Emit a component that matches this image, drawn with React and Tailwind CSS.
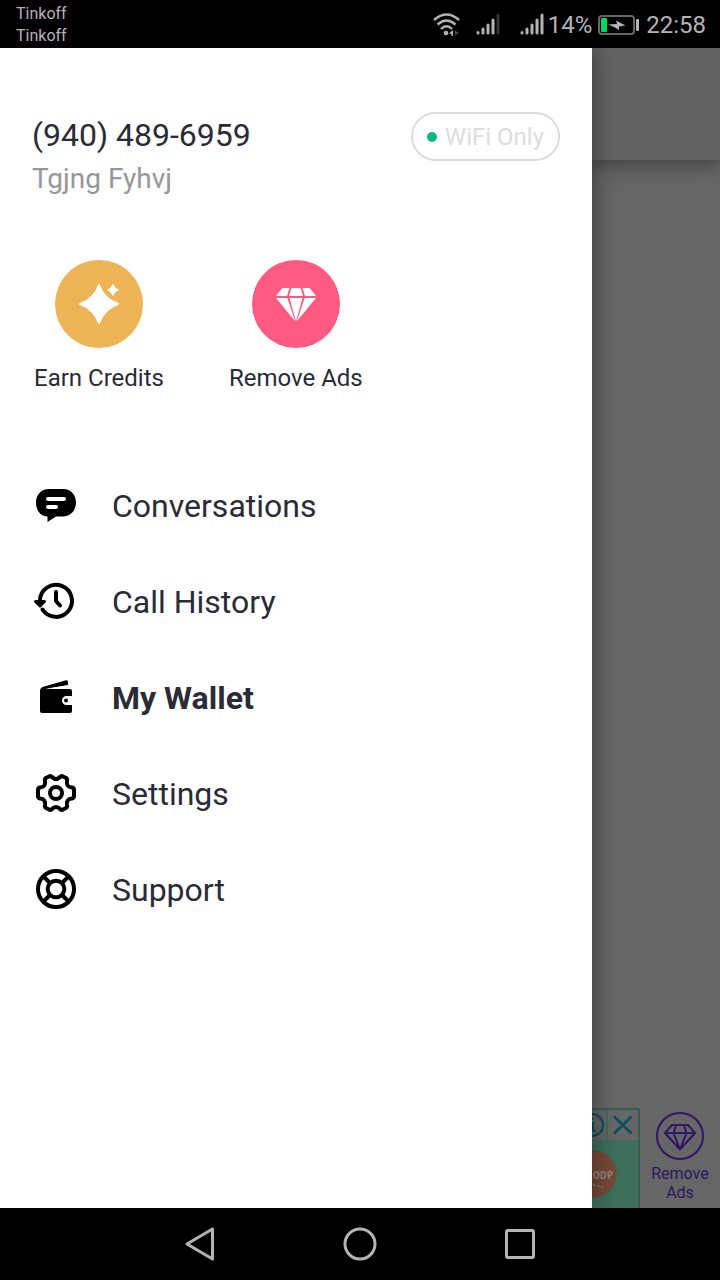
import React from 'react';

function WifiIcon() {
  return (
    <svg width="28" height="24" viewBox="0 0 28 24" fill="none" stroke="#b3b3b3" strokeWidth="2.4" aria-hidden="true">
      <path d="M2 7Q14.500 -4 27 7" />
      <path d="M5.500 11.500Q14.500 3.500 23.500 11.500" />
      <path d="M9 16Q14.500 10.500 20 16" />
      <circle cx="14" cy="20" r="2.300" fill="#b3b3b3" stroke="none" />
      <path d="M17 20.500L21 17V23H19.500V21z" fill="#b3b3b3" stroke="none" />
      <path d="M23 17.500v5l4-2.500z" fill="#444" stroke="none" />
    </svg>
  );
}

function SignalIcon({ last }) {
  return (
    <svg width="24" height="24" viewBox="0 0 24 24" strokeWidth="3" strokeLinecap="round" stroke="#b3b3b3" aria-hidden="true">
      <path d="M2 19.500V20M7 16V20M12 12V20M17 7V20" />
      <path d="M22 2V20" stroke={last} />
    </svg>
  );
}

function BatteryIcon() {
  return (
    <svg width="42" height="22" viewBox="0 0 42 22" aria-hidden="true">
      <rect x="1" y="2" width="35" height="18" rx="3" fill="none" stroke="#666" strokeWidth="2" />
      <rect x="3" y="4" width="6" height="14" rx="1" fill="#00d95a" />
      <path d="M10 10.500L19 10L18 6.500L27.500 11.500L21 12.500L21 16L16 13z" fill="#b3b3b3" />
      <rect x="38" y="5" width="3" height="12" rx="1" fill="#b3b3b3" />
    </svg>
  );
}

function SparkleIcon() {
  return (
    <svg width="88" height="88" viewBox="0 0 88 88" fill="#fff" stroke="#fff" strokeLinejoin="round" aria-hidden="true">
      <path d="M44 25Q49 39 63 44Q49 49 44 63Q39 49 25 44Q39 39 44 25z" strokeWidth="2" />
      <path d="M58 24.500Q59.500 28.500 63.500 30Q59.500 31.500 58 35.500Q56.500 31.500 52.500 30Q56.500 28.500 58 24.500z" strokeWidth="1" />
    </svg>
  );
}

function GemIcon() {
  return (
    <svg width="88" height="88" viewBox="0 0 88 88" fill="#fff" aria-hidden="true">
      <path d="M30.500 28H37.500L35 36H24zM39.500 28h9L51 36H37zM50.500 28H57.500L64 36H53zM24 38h11.500L43 61zM37.500 38h13L44 61.500zM52.500 38H64L45 61z" />
    </svg>
  );
}

function ChatIcon() {
  return (
    <svg width="48" height="48" viewBox="0 0 48 48" aria-hidden="true">
      <path d="M17 7H31C39 7 44 13 44 20.500S39 34.500 31 34.500H24L15.500 40V34.500C8 34 4 28 4 20.500S9 7 17 7z" />
      <path d="M16 17H32M16 25H24" stroke="#fff" strokeWidth="4" strokeLinecap="round" />
    </svg>
  );
}

function HistoryIcon() {
  return (
    <svg width="48" height="48" viewBox="0 1 48 48" fill="none" stroke="#000" strokeWidth="4" strokeLinecap="round" strokeLinejoin="round" aria-hidden="true">
      <path d="M8 23A16 16 0 1 1 10.500 32.500" />
      <path d="M24 15V24L28 28.500" />
      <path d="M3.500 24.500H12.500L8 29z" fill="#000" strokeWidth="3" />
    </svg>
  );
}

function WalletIcon() {
  return (
    <svg width="48" height="48" viewBox="0 1 48 48" aria-hidden="true">
      <path d="M8 17.500Q8 15 10.500 14L34 7.300Q36 7 36 9V12L15 16H38Q40 16 40 18V23H34.500A4 4 0 0 0 34.500 32H40V38Q40 40 38 40H10Q8 40 8 38z" />
      <path d="M13 15.800L36 12.200V15.800z" fill="#fff" />
      <circle cx="34" cy="27.500" r="2" />
    </svg>
  );
}

function GearIcon() {
  return (
    <svg width="48" height="48" viewBox="0 1 48 48" fill="none" stroke="#000" strokeWidth="4" strokeLinejoin="round" aria-hidden="true">
      <path d="M17 7.500Q18.500 6.500 20 8Q24 12 28 8Q29.500 6.500 31 7.500L34 9Q35.500 10 35 12Q34 18 40 18.500Q42 19 42 21V27Q42 29 40 29.500Q34 30 35 36Q35.500 38 34 39L31 40.500Q29.500 41.500 28 40Q24 36 20 40Q18.500 41.500 17 40.500L14 39Q12.500 38 13 36Q14 30 8 29.500Q6 29 6 27V21Q6 19 8 18.500Q14 18 13 12Q12.500 10 14 9z" />
      <circle cx="24" cy="24" r="6" />
    </svg>
  );
}

function SupportIcon() {
  return (
    <svg width="48" height="48" viewBox="0 1 48 48" fill="none" stroke="#000" strokeWidth="4" aria-hidden="true">
      <circle cx="24" cy="24" r="18" />
      <circle cx="24" cy="24" r="8.300" />
      <path d="M11.500 11.500L18 18M36.500 11.500L30 18M11.500 36.500L18 30M36.500 36.500L30 30" />
    </svg>
  );
}

function OutlineGemIcon() {
  return (
    <svg width="50" height="50" viewBox="0 0 50 50" fill="none" stroke="#2e1565" strokeWidth="2" strokeLinejoin="round" aria-hidden="true">
      <circle cx="25" cy="25" r="23" />
      <path d="M17 14H33L40 22L25 38.500L10 22zM10 22H40M21 14L18.500 22L25 38.500L31.500 22L29 14" />
    </svg>
  );
}

function AdBadge() {
  return (
    <svg width="48" height="68" viewBox="0 0 48 68" aria-hidden="true">
      <circle cx="1" cy="34" r="23.500" fill="#774837" />
      <g fill="#8f8783" fontFamily="Roboto, sans-serif" fontWeight="700">
        <text x="1" y="39" fontSize="10">OD</text>
        <text x="16" y="39" fontSize="10" transform="rotate(-15 16 39)">P</text>
        <path d="M1 45q5 0 10 3" stroke="#806b60" strokeWidth="2" strokeDasharray="3 1" fill="none" />
      </g>
    </svg>
  );
}

const menu = [
  { label: 'Conversations', Icon: ChatIcon },
  { label: 'Call History', Icon: HistoryIcon },
  { label: 'My Wallet', Icon: WalletIcon, active: true },
  { label: 'Settings', Icon: GearIcon },
  { label: 'Support', Icon: SupportIcon },
];

function StatusBar() {
  return (
    <header className="relative z-20 flex h-12 items-center justify-between bg-black pt-0.5 pr-3.5 pl-4 text-[#b3b3b3]">
      <div className="text-base leading-[22px]">
        <p>Tinkoff</p>
        <p>Tinkoff</p>
      </div>
      <div className="flex items-center text-2xl">
        <WifiIcon />
        <span className="ml-4 flex"><SignalIcon last="#333" /></span>
        <span className="ml-5 flex"><SignalIcon last="#b3b3b3" /></span>
        <span className="ml-1">14%</span>
        <span className="mx-1.5 flex"><BatteryIcon /></span>
        <span>22:58</span>
      </div>
    </header>
  );
}

function Drawer() {
  return (
    <section className="relative z-10 flex-1 bg-white px-8 pt-16 text-[#2a2b37] shadow-[0_0_24px_rgba(0,0,0,0.45)]">
      <div className="flex items-start justify-between">
        <div>
          <h1 className="text-[32px] leading-[46px]">(940) 489-6959</h1>
          <p className="text-[28px] leading-[42px] text-[#96969b]">Tgjng Fyhvj</p>
        </div>
        <p className="flex h-[49px] items-center gap-2 rounded-full border-2 border-[#dcdcdc] px-3.5 text-2xl text-[#dcdddf]">
          <span className="size-2.5 rounded-full bg-[#0ab77b]" />
          WiFi Only
        </p>
      </div>
      <div className="mt-[60px] flex gap-[61px]">
        <button type="button" className="flex flex-col items-center px-0.5 text-2xl">
          <span className="mb-3.5 rounded-full bg-[#eeb355]"><SparkleIcon /></span>
          Earn Credits
        </button>
        <button type="button" className="flex flex-col items-center px-0.5 text-2xl">
          <span className="mb-3.5 rounded-full bg-[#ff5a80]"><GemIcon /></span>
          Remove Ads
        </button>
      </div>
      <nav className="mt-16">
        {menu.map(({ label, Icon, active }) => (
          <a key={label} href="#" className="flex h-24 items-center gap-8">
            <Icon />
            <span className={active ? 'text-[32px] font-bold' : 'text-[32px]'}>{label}</span>
          </a>
        ))}
      </nav>
    </section>
  );
}

function Backdrop() {
  return (
    <aside className="flex w-32 flex-col overflow-hidden bg-[#666]">
      <div className="h-28 bg-[#636363] shadow-[0_4px_20px_rgba(0,0,0,0.4)]" />
      <div className="mt-auto flex h-[100px]">
        <div className="flex w-12 flex-col border-t-2 border-r-2 border-[#345f4e] bg-[#3d6f5b]">
          <div className="flex h-[30px] gap-0.5">
            <span className="w-3.5 bg-[#666]">
              <svg width="14" height="30" viewBox="0 0 14 30" fill="none" stroke="#06505f" strokeWidth="2" aria-hidden="true">
                <circle cx="0" cy="15" r="11" />
                <path d="M-2 13H1V21M-3 21H4M0 8V10" />
              </svg>
            </span>
            <button type="button" aria-label="Close ad" className="flex-1 bg-[#666]">
              <svg width="30" height="30" viewBox="0 0 30 30" fill="none" stroke="#06505f" strokeWidth="2.500" aria-hidden="true">
                <path d="M6 6.500L23.500 23.500M23.500 6.500L6 23.500" />
              </svg>
            </button>
          </div>
          <AdBadge />
        </div>
        <button type="button" className="flex flex-1 flex-col items-center pt-[3px] text-base leading-[19px] text-[#2e1565]">
          <OutlineGemIcon />
          <span className="mt-[3px]">Remove<br />Ads</span>
        </button>
      </div>
    </aside>
  );
}

function NavigationBar() {
  return (
    <footer className="relative z-20 flex h-[72px] items-center justify-center gap-28 bg-black">
      <button type="button" aria-label="Back">
        <svg width="48" height="48" viewBox="0 0 48 48" fill="none" stroke="#b3b3b3" strokeWidth="3" strokeLinejoin="round" aria-hidden="true">
          <path d="M36.500 9V39L11 24z" />
        </svg>
      </button>
      <button type="button" aria-label="Home">
        <svg width="48" height="48" viewBox="0 0 48 48" fill="none" stroke="#b3b3b3" strokeWidth="3" aria-hidden="true">
          <circle cx="24" cy="24" r="15" />
        </svg>
      </button>
      <button type="button" aria-label="Recent apps">
        <svg width="48" height="48" viewBox="0 0 48 48" fill="none" stroke="#b3b3b3" strokeWidth="3" aria-hidden="true">
          <rect x="10.500" y="10.500" width="27" height="27" rx="1.500" />
        </svg>
      </button>
    </footer>
  );
}

export default function App() {
  return (
    <div className="flex min-h-screen flex-col bg-black font-['Roboto',sans-serif]">
      <StatusBar />
      <main className="flex flex-1">
        <Drawer />
        <Backdrop />
      </main>
      <NavigationBar />
    </div>
  );
}
